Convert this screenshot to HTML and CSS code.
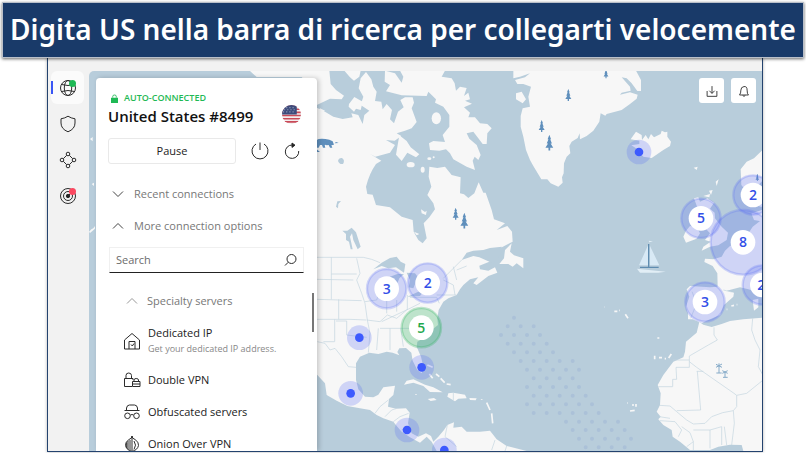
FILE: index.html
```html
<!DOCTYPE html>
<html lang="it">
<head>
<meta charset="utf-8">
<meta name="viewport" content="width=device-width, initial-scale=1">
<title>Digita US nella barra di ricerca</title>
<link rel="stylesheet" href="styles.css">
</head>
<body>
<h1 class="banner">Digita US nella barra di ricerca per collegarti velocemente</h1>

<main class="app">
  <nav class="rail" aria-label="Sections">
    <a class="rail-item active" href="#map" aria-label="VPN">
      <svg class="icon" viewBox="0 0 18 18"><circle cx="9" cy="9" r="7.5"/><ellipse cx="9" cy="9" rx="3.7" ry="7.5"/><path d="M2.5 5.5Q9 7.5 15.500 5.500M2.500 12.500Q9 10.500 15.500 12.500"/><circle class="dot-green" cx="13.500" cy="4.500" r="3.500"/></svg>
    </a>
    <a class="rail-item" href="#protection" aria-label="Threat protection">
      <svg class="icon" viewBox="0 0 18 18"><path d="M9 1.200Q12 3.200 16 3.800V8Q16 14 9 16.800Q2 14 2 8V3.800Q6 3.200 9 1.200Z"/></svg>
    </a>
    <a class="rail-item" href="#mesh" aria-label="Meshnet">
      <svg class="icon" viewBox="0 0 18 18"><circle cx="9" cy="3" r="1.800"/><circle cx="9" cy="15" r="1.800"/><circle cx="3" cy="9" r="1.800"/><circle cx="15" cy="9" r="1.800"/><path d="M10.300 4.300L13.700 7.700M4.300 10.300L7.700 13.700M13.700 10.300L10.300 13.700M4.300 7.700L7.700 4.300"/></svg>
    </a>
    <a class="rail-item" href="#monitor" aria-label="Dark web monitor">
      <svg class="icon" viewBox="0 0 18 18"><circle cx="9" cy="9" r="7.500"/><circle cx="9" cy="9" r="4.500"/><circle class="ink" cx="9" cy="9" r="1.700"/><path d="M9 9L13 5"/><circle class="dot-red" cx="13.500" cy="4.500" r="3.500"/></svg>
    </a>
  </nav>

  <section class="map" id="map">
    <svg class="world" viewBox="267 213 2019 1140" preserveAspectRatio="xMinYMin slice" role="img" aria-label="Server map">
      <defs>
        <path id="tree" d="M0-18L4-8H2L6 2H3L9 12H2V18H-2V12H-9L-3 2H-6L-2-8H-4Z"/>
        <g id="pin"><circle r="37" class="halo"/><circle r="13" class="core"/></g>
        <g id="cluster"><circle r="59" class="ring"/><circle r="37" class="hub"/></g>
      </defs>

      <g class="land">
        <path d="M750 213H950L960 260L940 270L905 231H770ZM270 417L278 411V424ZM275 552L282 548V558ZM267 695L274 688L280 685L285 678V686L270 699Z"/>
        <!-- Northern Canada and Greenland -->
        <g transform="translate(930 180)">
          <path d="M0 150L22 144L45 155L70 170L98 177L128 172L124 160L145 165L158 192L163 165L178 152L152 135L160 110L146 85L152 55L168 36L184 58L190 80L200 95L195 123L214 125L218 148L230 132L246 150L240 178L252 190L264 155L281 142L271 120L285 112L308 112L312 128L305 145L320 186L305 205L285 212L260 220L274 228L254 242L228 240L255 255L240 278L196 290L180 282L214 302L198 312Q178 340 168 380L172 402L188 404L198 435L240 442L275 470L308 480L311 515L325 540L338 550L350 535L341 490L358 472L375 448L370 430L352 405L364 380L356 350L358 320L382 324L405 320L425 345L452 352L450 400L462 403L475 414L493 400L506 367L520 398L527 398L545 450L552 478L585 490L560 510L592 498L606 515L608 545L570 565L515 574L485 575L455 603H0Z"/>
          <path d="M0 40L22 32L58 32L62 72L78 90L102 107L95 118L60 116L22 134H0ZM103 32L152 32L148 50L132 62L120 52ZM117 132L133 111L158 125L152 150L138 146L132 155L116 140Z"/>
          <path d="M225 32L255 40L275 68L280 50L270 32H405L395 50L425 55L434 70L438 92L450 80L470 84L462 108L475 98L480 118L465 122L486 131L462 142L480 158L475 172L495 172L510 190L532 192L545 205L532 220L530 252L518 252L505 235L490 215L470 220L478 236L500 255L512 285L505 300L494 290L488 302L495 330L470 320L430 298L420 280L408 268L388 272L360 270L357 250L370 243L405 246L398 225L418 200L418 165L400 140L375 128L378 118L355 95L350 108L275 106L228 94L240 75L224 65Z"/>
          <path d="M268 226L290 243L302 262L328 283L318 292L292 278L275 303L258 284ZM30 145L45 152L22 168V158Z"/>
          <ellipse cx="379" cy="175" rx="14" ry="18"/><ellipse cx="302" cy="314" rx="12" ry="8"/><ellipse cx="338" cy="329" rx="6" ry="9"/><ellipse cx="358" cy="296" rx="6" ry="4"/><ellipse cx="371" cy="292" rx="3" ry="3"/><path d="M333 448L345 456L350 452L348 465L335 460ZM312 515L328 522L320 526Z"/>
        </g>
        <g transform="translate(1590 180)">
          <path d="M-50 32H318L333 60V93L322 93L305 70L290 55L275 52L300 80L302 92L275 98L270 104L300 97L323 104L320 116L300 132L275 150L230 162L226 167L212 160L208 185L190 212L170 228L150 238L149 220L143 234L125 245L118 258L121 280L110 290L102 310L101 340L96 352L98 368L85 380L62 370L52 358L34 358L10 318L0 300L-12 270L-20 230L-28 200V168L-22 145L0 140L-5 110L3 80L-20 72H-38L-45 60L-15 52L0 40L-30 50L-50 55ZM-42 100L-25 95L-12 118L-22 130L-42 118Z"/>
          <path d="M302 238L318 215L335 225L336 240L347 225L355 238L363 222L372 232L392 222L395 212L405 217L412 215V230L423 245L420 258L400 270L365 294L340 290L318 265L304 256L328 252L328 242ZM491 323L503 320L500 330ZM557 365L566 358L560 378ZM537 392L548 390L543 405ZM520 408L540 402L538 412Z"/>
          <path d="M700 268L672 295L650 305L632 328L634 375L650 395L668 392L700 360ZM700 380L670 420L690 440H700ZM664 460L697 450V485L672 480Z"/>
          <path d="M492 415L505 412L510 425L532 415L552 428L540 446L554 458L555 475L575 500L594 518L590 540L565 556L540 560L515 572L520 560L542 545L525 540L540 520L526 505L540 490L510 465ZM460 530L468 512L480 498L500 502L510 520L500 536L468 548Z"/>
        </g>
        <!-- The Americas -->
        <g transform="translate(930 750)">
          <path d="M0 0H490L500 12L530 0L545 20L538 35L508 47L510 58L535 62L555 52L562 68L535 78L500 105L490 100L505 82L480 88L460 105L450 118L440 135L415 145L400 155L386 180L382 205L384 225L365 240L345 262L322 275L320 290L333 320L340 350L335 370L322 360L308 332L304 308L288 294L268 295L262 306L268 316L248 308L230 305L205 312L178 308L150 320L138 340V390L145 418L165 440L190 442L205 434L220 412L255 407L250 435L237 447L234 470L258 476L288 475L299 488L294 520L305 550L325 560L348 550L363 558L370 575L385 560L402 540L412 525L432 517L430 533L455 530L470 545L510 545L540 542L560 568L590 588L650 603H380L365 575L350 560L330 578L300 562L275 545L262 530L250 515L220 505L200 495L180 480L150 475L112 468L80 452L50 435L45 400L22 375L0 360Z"/>
          <path d="M282 404L290 392L310 388L345 404L370 412L398 427L360 426L340 408L310 398ZM412 440L415 430L430 428L465 434L470 445L445 446L435 454ZM353 447L372 444L380 450L362 453ZM478 444L500 445L497 451L480 450ZM568 42L582 25L585 0L605 -20L600 5L612 16L640 25V55L620 40L608 50L595 42Z"/>
          <path class="isles" d="M352 345L368 352M358 372L368 385M378 372L388 380M392 385L404 398M410 402L422 404M515 447V449M530 458L540 480M545 490L548 520M318 432V434"/>
        </g>
        <!-- Europe and Africa -->
        <g transform="translate(1590 750)">
          <path d="M700 -95L668 -70L650 -42L630 -25L600 -12L585 2L575 20L550 28L525 26L523 36L548 48L562 70L563 110L540 112L480 108L470 118L478 140L468 170L474 190V208H488L515 220L530 212L570 195L582 165L610 140L612 128L590 122L630 112L655 118L700 132ZM668 150L685 146V172L672 182Z"/>
          <path d="M508 216L520 224L545 231L575 222L600 213L640 208L700 203V603H640L635 585L600 584L565 590L540 600H480L450 575L428 560L425 540L400 525L385 508L392 500L380 485L390 465L392 430L383 405L400 375L430 335L460 322L465 305L468 275L500 248Z"/>
          <path class="isles" d="M590 178H592M604 168L612 166M620 164H622M253 184L262 184M268 181H270M286 193L294 205M382 264H388M374 317V328M387 323L396 323M404 326H408M416 324L424 312M292 459H294M306 465H312M318 462V470M300 483L314 481M224 171H225"/>
        </g>
      </g>

      <g class="water">
        <g transform="translate(930 180)">
          <path d="M84 303Q86 293 96 294Q106 300 99 312Q88 314 84 303ZM78 440L82 424L93 423L85 432L84 445ZM97 512L112 512L125 503L138 517L152 560L143 568L130 540L126 520L120 530L128 568H122L117 545L108 540V522Z"/>
        </g>
        <g transform="translate(930 750)">
          <path d="M190 58L215 38L240 24L260 20L272 35L286 42L282 68L258 52L235 55L215 48ZM240 80L262 72L282 72L268 85L258 110L252 130L246 110ZM290 68L315 70L330 90L318 95L310 115L296 112L300 90ZM292 140L325 125L345 118L330 138ZM345 105L375 98L370 110L350 112ZM455 30L470 8L490 2L520 0L540 -6L575 -10V8L550 40L538 35L508 22L490 18Z"/>
        </g>
      </g>

      <g class="borders">
        <g transform="translate(930 750)">
          <path d="M20 22H160L185 28L210 38M20 88L130 90M20 148L155 152M20 208H120L168 210M64 22V148M64 72H140M86 148V208M74 208V275H40M140 25L150 70L140 90L155 130L165 160L172 210L180 250L175 308M78 213H110V255L170 262M165 155L200 150L215 110M215 215L300 175L330 160M210 235L300 235H370M205 235L200 300M240 235V300M272 235L280 290M170 210L210 215L232 195L260 205L290 180M230 150V190M260 150V185M292 135V180M300 142H380L388 160M380 135H440M400 90L430 105L435 135M430 50L440 90M400 85L455 30M440 60L470 48M22 275L45 280L60 300L75 295L95 320L115 350L138 352M195 490L210 470L235 450M225 500L245 480L258 476M250 515L270 500L296 490M275 540L300 525M430 428V450M412 525L405 560L440 590M555 570L545 600M590 588L585 603"/>
        </g>
        <g transform="translate(1590 750)">
          <path d="M552 232V255L562 270L535 285L478 318V352H438L440 388H428V410H385M428 330H478M478 335L500 352L612 430L620 436L650 430L697 392M500 364H520M502 364L512 480L440 482M620 436V470L610 482L578 488L545 500L525 520L490 522L470 510L440 485L420 468L388 466M388 500L420 505M390 512L435 515L455 540L445 560M455 530L480 548L490 575L470 590M490 575V600M490 540L540 540V595M540 540L575 530V585M583 530L590 585M610 482L613 520L605 585M668 205L665 240L675 270L690 300L685 350L697 372M580 120L605 126M486 125L500 160L482 205"/>
        </g>
      </g>

      <g class="shoal" transform="translate(1590 750)">
        <path d="M-48 203h1M-67 229h79M-87 255h118M-67 281h118M-48 307h118M-28 333h157M-9 359h157M11 385h118M-9 411h157M11 437h157M-9 463h196M11 489h196M108 515h157M128 540h157M147 566h157M167 592h118"/>
      </g>

      <g class="flora">
        <use href="#tree" x="1367" y="641"/><use href="#tree" transform="translate(1393 662) scale(1.300)"/>
        <use href="#tree" x="1705" y="285"/><use href="#tree" x="1625" y="378"/>
        <use href="#tree" transform="translate(1648 428) scale(1.300)"/><use href="#tree" transform="translate(1818 220) scale(.8)"/>
        <use href="#tree" transform="translate(2272 532) scale(.6)"/>
        <path d="M950 420L956 417Q970 415 988 419L998 424L1002 434L994 436L997 443H990L986 435L980 436L977 434L974 436L976 443H969L966 435H960L956 443H950ZM1004 430L1008 426L1016 429ZM950 448L960 456H950Z"/>
        <path class="palm" d="M2157 1098V1119M2149 1119H2165M2148 1102L2166 1092M2148 1093L2166 1102M2157 1090V1100M2175 1115V1132M2169 1132H2183M2167 1120L2183 1112M2167 1112L2183 1120"/>
      </g>
      <g transform="translate(1590 750)">
        <path class="sail" d="M354-14V46H327ZM359-14L388 46H359Z"/><path class="mast" d="M356-18V50M330 52H386"/><path class="hull" d="M321 56L407 65L385 68H330Z"/><path class="hull" d="M356-28L369-26L358-23Z"/>
      </g>

      <g class="markers">
        <use href="#pin" x="1917" y="456"/><use href="#pin" x="1078" y="1013"/><use href="#pin" x="1265" y="1102"/><use href="#pin" x="1052" y="1180"/><use href="#pin" x="1221" y="1290"/><use href="#pin" x="1333" y="1350"/>
        <circle r="97" cx="2229" cy="727" class="ring"/><circle r="37" cx="2229" cy="727" class="hub"/>
        <use href="#cluster" x="1160" y="866"/><use href="#cluster" x="1283" y="849"/>
        <use href="#cluster" x="2103" y="655"/><use href="#cluster" x="2259" y="585"/><use href="#cluster" x="2115" y="906"/><use href="#cluster" x="2287" y="855"/>
        <use class="current" href="#cluster" x="1264" y="983"/>
        <g class="counts">
          <text x="1160" y="881">3</text><text x="1283" y="864">2</text><text class="count-green" x="1264" y="998">5</text><text x="2103" y="670">5</text><text x="2259" y="600">2</text><text x="2229" y="742">8</text><text x="2115" y="921">3</text><text x="2284" y="870">2</text>
        </g>
      </g>
    </svg>

    <aside class="panel">
      <header class="status">
        <div class="status-text">
          <p class="state"><svg class="lock" viewBox="0 0 8 10"><path d="M0 4H8V10H0Z"/><path class="shackle" d="M2 4V2.500Q2 1 4 1T6 2.500V4"/></svg>AUTO-CONNECTED</p>
          <h2>United States #8499</h2>
        </div>
        <svg class="flag" viewBox="0 0 18 18" role="img" aria-label="United States flag">
          <clipPath id="round"><circle cx="9" cy="9" r="9"/></clipPath>
          <g clip-path="url(#round)"><path fill="#f3eeee" d="M0 0H18V18H0Z"/><path stroke="#c94a58" stroke-width="1.500" d="M0 1H18M0 4H18M0 7H18M0 10H18M0 13H18M0 16H18"/><path fill="#3d4c7c" d="M0 0H14V9H0Z"/><path stroke="#98a1bd" stroke-dasharray="1 2" d="M1 2.500H13M2 4.500H13M1 6.500H13"/></g>
        </svg>
      </header>

      <div class="actions">
        <button class="pause" type="button">Pause</button>
        <button class="plain" type="button" aria-label="Disconnect"><svg class="icon" viewBox="0 0 18 18"><path d="M9 .5V8M5 2A8 8 0 1 0 13 2"/></svg></button>
        <button class="plain" type="button" aria-label="Reconnect"><svg class="icon" viewBox="0 0 18 18"><path d="M9 3A6.700 6.700 0 1 0 15.700 9"/><path class="ink" d="M9 1L12 3.200L9 5.400Z"/></svg></button>
      </div>

      <button class="fold" type="button" aria-expanded="false"><svg class="chevron" viewBox="0 0 12 12"><path d="M1 3.500L6 8.500L11 3.500"/></svg>Recent connections</button>
      <button class="fold" type="button" aria-expanded="true"><svg class="chevron" viewBox="0 0 12 12"><path d="M1 8.500L6 3.500L11 8.500"/></svg>More connection options</button>

      <div class="search">
        <input type="search" id="q" placeholder="Search" aria-label="Search">
        <label for="q"><svg class="icon" viewBox="0 0 18 18"><circle cx="10.500" cy="8" r="4.500"/><path d="M7.300 11.200L4 14.500"/></svg></label>
      </div>

      <div class="servers">
        <button class="group" type="button" aria-expanded="true"><svg class="chevron faint" viewBox="0 0 12 12"><path d="M1 8.500L6 3.500L11 8.500"/></svg>Specialty servers</button>
        <ul>
          <li class="tall"><svg class="icon" viewBox="0 0 18 18"><path d="M1.500 17V8L9 1.500L16.500 8V17ZM6 17V9.500H12V17M8 12.500L9.300 14L11 11.500"/></svg><span>Dedicated IP<small>Get your dedicated IP address.</small></span></li>
          <li><svg class="icon" viewBox="0 0 18 18"><path d="M9 15.500H1.500V7.500H10V9M3 7.500V4.500Q3 2 5.700 2T8.500 4.500V7.500M9.500 10.500H17V15.500H9.500ZM11 10.500V9Q11 7.500 13.200 7.500T15.500 9V10.500M9.500 13H17"/></svg><span>Double VPN</span></li>
          <li><svg class="icon" viewBox="0 0 18 18"><path d="M1.500 7.500H16.500M3.500 7.500V5Q4 2 6.500 2H11.500Q14 2 14.500 5V7.500M7.500 12Q9 11 10.500 12"/><circle cx="4.500" cy="12.800" r="2.800"/><circle cx="13.500" cy="12.800" r="2.800"/></svg><span>Obfuscated servers</span></li>
          <li><svg class="icon" viewBox="0 0 18 18"><path d="M9 1Q9 3.500 12 4.500Q16 7 15.500 10.500Q14.500 15 9 16.500Q3.500 15 2.500 10.500Q2 7 6 4.500Q9 3.500 9 1V16.500M7 5V15.500M5 6V14.500M3.700 7.500V13M11 6Q14 10 11 14.500"/></svg><span>Onion Over VPN</span></li>
        </ul>
      </div>
    </aside>

    <div class="tools">
      <button type="button" aria-label="Downloads"><svg class="icon" viewBox="0 0 18 18"><path d="M3.500 9V15H14.500V9M9 3.500V11.500M6 8.700L9 11.700L12 8.700"/></svg></button>
      <button type="button" aria-label="Notifications"><svg class="icon" viewBox="0 0 18 18"><path d="M4 13.500Q5.500 11.500 5.500 8T9 4T12.500 8T14 13.500ZM7.500 14Q9 16 10.500 14"/></svg></button>
    </div>
  </section>
</main>
</body>
</html>
```

FILE: styles.css
```css
* { box-sizing: border-box; }

body {
  margin: 0;
  height: 100vh;
  display: flex;
  flex-direction: column;
  overflow: hidden;
  background: #fff;
  color: #222;
  font: 11px/16px "Open Sans", "Noto Sans", sans-serif;
}

h1, h2, p, ul { margin: 0; padding: 0; }
button { font: inherit; color: inherit; background: none; border: 0; padding: 0; cursor: pointer; }

.banner {
  position: relative;
  z-index: 2;
  margin: 2px 2px 0;
  padding: 5px 0 7px;
  border: 1px solid #b9bfc9;
  background: #193a69;
  box-shadow: 0 1px 3px rgba(0, 0, 0, .6);
  color: #fff;
  font: 600 28px/42px "Noto Sans", sans-serif;
  text-align: center;
  white-space: nowrap;
}

.app {
  flex: 1;
  min-height: 0;
  display: flex;
  margin: 0 43px 1px 47px;
  padding-top: 13px;
  border: 1px solid #24436f;
  border-top: 0;
  background: #f2f2f2;
  box-shadow: 0 0 3px rgba(0, 0, 0, .3);
}

.icon { display: block; width: 18px; height: 18px; fill: none; stroke: #2b2b2b; stroke-width: 1; }
.icon .ink { fill: #222; }
.icon .dot-green { fill: #1fb955; stroke: none; }
.icon .dot-red { fill: #fb4860; stroke: none; }

.rail { display: flex; flex-direction: column; gap: 3px; padding: 0 5px 0 3px; flex: 0 0 41px; }
.rail-item { display: grid; place-items: center; height: 33px; border-radius: 6px; }
.rail-item.active {
  background: linear-gradient(#3a56f5, #3a56f5) 0 10px / 2px 13px no-repeat, #fbfbfb;
}

.map {
  position: relative;
  flex: 1;
  display: flex;
  justify-content: space-between;
  align-items: flex-start;
  padding: 7px 6px 0 7px;
  overflow: hidden;
  border-radius: 5px 0 0 0;
  background: #b8cddb;
}

.world { position: absolute; inset: 0; width: 100%; height: 100%; }
.land { fill: #f7f7f7; }
.isles { fill: none; stroke: #f7f7f7; stroke-width: 5; }
.water { fill: #b8cddb; }
.borders { fill: none; stroke: #c3d4e0; stroke-width: 2; }
.shoal { fill: none; stroke: #abc1d8; stroke-width: 12; stroke-linecap: round; stroke-dasharray: 0 39; }
.flora { fill: #5f8fbc; }
.palm { fill: none; stroke: #86abc9; stroke-width: 3; }
.sail { fill: #d8e9f5; }
.mast { fill: none; stroke: #5f8cb0; stroke-width: 4; }
.hull { fill: #e2eef6; }
.markers { --tint: rgba(92, 112, 245, .26); }
.current { --tint: rgba(40, 175, 90, .28); }
.halo { fill: var(--tint); }
.core { fill: #3d5afe; }
.ring { fill: var(--tint); stroke: var(--tint); stroke-width: 7; }
.hub { fill: #fff; }
.counts { fill: #3350e8; font: 600 42px "Open Sans", sans-serif; text-anchor: middle; }
.count-green { fill: #1fa94e; }

.panel {
  position: relative;
  flex: 0 0 221px;
  align-self: stretch;
  overflow: hidden;
  padding: 12px 13px 0 12px;
  border-radius: 4px 4px 0 0;
  background: #fff;
  box-shadow: 2px 0 5px rgba(0, 0, 0, .2);
}

.status { display: flex; justify-content: space-between; align-items: center; padding-right: 3px; }
.state { display: flex; align-items: center; gap: 6px; padding-left: 3px; color: #1fb955; font-size: 9px; font-weight: 600; }
.lock { width: 7px; height: 9px; fill: #1fb955; }
.shackle { fill: none; stroke: #1fb955; }
.status h2 { color: #111; font: 600 15px/20px "Open Sans", sans-serif; white-space: nowrap; }
.flag { width: 19px; height: 19px; margin-top: 15px; margin-bottom: 2px; }

.actions { display: flex; align-items: center; gap: 15px; margin: 12px 4px 14px 0; }
.pause { flex: 1; height: 26px; border: 1px solid #e9e9e9; border-radius: 3px; }
.plain { width: 17px; }

.fold { display: flex; align-items: center; gap: 10px; width: 100%; height: 32px; padding-left: 4px; color: #777; }
.chevron { width: 12px; height: 12px; fill: none; stroke: #444; }
.faint { stroke: #999; }

.search { display: flex; align-items: center; height: 26px; margin: 5px 0 12px 1px; padding: 0 4px 0 6px; border: 1px solid #f0f0f0; border-bottom: 1px solid #222; }
.search input { flex: 1; min-width: 0; padding: 0; border: 0; outline: 0; background: none; font: inherit; }
.search input::placeholder { color: #6b6b6b; opacity: 1; }

.servers { background: linear-gradient(#777, #777) 100% 8px / 2px 39px no-repeat; margin-right: -10px; }
.group { display: flex; align-items: center; gap: 9px; height: 32px; padding-left: 18px; color: #777; }
.servers ul { list-style: none; }
.servers li { display: flex; align-items: center; gap: 7px; height: 32px; padding-left: 15px; }
.servers .tall { height: 47px; }
.servers small { display: block; color: #888; font-size: 9px; }

.tools { position: relative; display: flex; gap: 7px; }
.tools button { display: grid; place-items: center; width: 25px; height: 25px; border-radius: 3px; background: #fff; }
.tools .icon { width: 16px; height: 16px; }
```
